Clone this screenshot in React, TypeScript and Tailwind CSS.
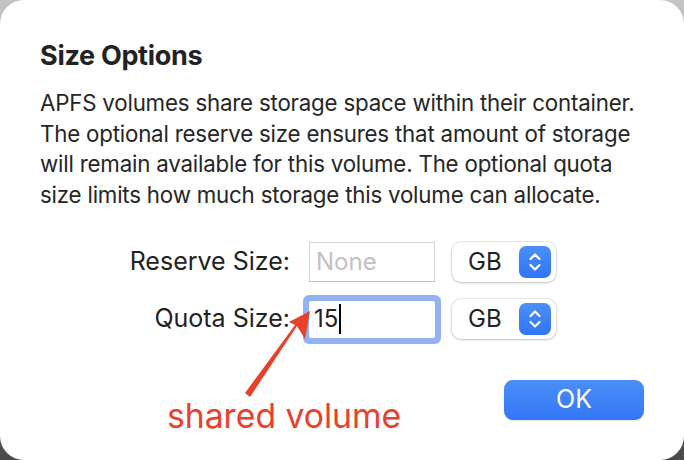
import React from 'react'

const font = { fontFamily: 'Inter, "Noto Sans", sans-serif' }

function Stepper() {
  return (
    <div className="w-[32px] h-[32px] rounded-[7px] bg-gradient-to-b from-[#4c8ff8] to-[#2f74f5] flex items-center justify-center">
      <svg width="16" height="24" viewBox="0 0 16 24" fill="none" stroke="white" strokeWidth="2.2" strokeLinecap="round" strokeLinejoin="round">
        <path d="M3.5 9 L8 4.5 L12.5 9" />
        <path d="M3.5 15 L8 19.5 L12.5 15" />
      </svg>
    </div>
  )
}

function UnitSelect() {
  return (
    <div className="w-[104px] h-[40px] rounded-[9px] bg-white shadow-[0_0_0_1px_rgba(0,0,0,0.08),0_1px_3px_rgba(0,0,0,0.18)] flex items-center justify-between pl-[16px] pr-[5px]">
      <span className="text-[24px] text-[#222]">GB</span>
      <Stepper />
    </div>
  )
}

export default function App() {
  return (
    <div className="w-[684px] h-[460px] bg-gradient-to-b from-[#c4c4c4] via-[#9a9a9a] to-[#4a4a4a]" style={font}>
      <div className="relative w-full h-full bg-white rounded-[24px] pl-[40px] pr-[30px] pt-[40px] flex flex-col">
        <h1 className="text-[27px] leading-[32px] font-bold text-[#222] tracking-[-0.3px]">Size Options</h1>
        <p className="mt-[16px] text-[22.3px] leading-[30.5px] text-[#262626] tracking-[-0.2px] whitespace-nowrap">
          APFS volumes share storage space within their container.
          <br />
          The optional reserve size ensures that amount of storage
          <br />
          will remain available for this volume. The optional quota
          <br />
          size limits how much storage this volume can allocate.
        </p>

        <div className="mt-[32px] grid grid-cols-[252px_126px_104px] gap-x-[17px] items-center">
          <span className="text-right text-[25px] text-[#222] pr-[2px]">Reserve Size:</span>
          <div className="h-[40px] border border-[#d4d4d4] border-b-[#bdbdbd] bg-white flex items-center px-[6px]">
            <span className="text-[24px] text-[#c2c2c2]">None</span>
          </div>
          <UnitSelect />

          <span className="mt-[17px] text-right text-[25px] text-[#222] pr-[2px]">Quota Size:</span>
          <div className="mt-[17px] h-[37px] bg-white ring-[6px] ring-[#92b2f6] rounded-[2px] flex items-center px-[5px]">
            <span className="text-[24px] text-[#222]">15</span>
            <span className="w-[2px] h-[30px] bg-black ml-[1px]" />
          </div>
          <div className="mt-[17px]">
            <UnitSelect />
          </div>
        </div>

        <div className="mt-auto mb-[40px] mr-[10px] flex justify-end">
          <button className="w-[140px] h-[40px] rounded-[9px] bg-gradient-to-b from-[#4b8ef8] to-[#3377f6] text-white text-[25px] shadow-[0_1px_2px_rgba(0,0,0,0.12)]">
            OK
          </button>
        </div>

        <svg className="absolute left-0 top-0 pointer-events-none" width="684" height="460" viewBox="0 0 684 460">
          <path d="M245 393 L250 397 L297 326 L305 339 L310 311 L289 322 L295 325 Z" fill="#e8412a" />
        </svg>
        <span className="absolute left-[167px] top-[396px] text-[33.7px] leading-[40px] text-[#e8412a]">shared volume</span>
      </div>
    </div>
  )
}
